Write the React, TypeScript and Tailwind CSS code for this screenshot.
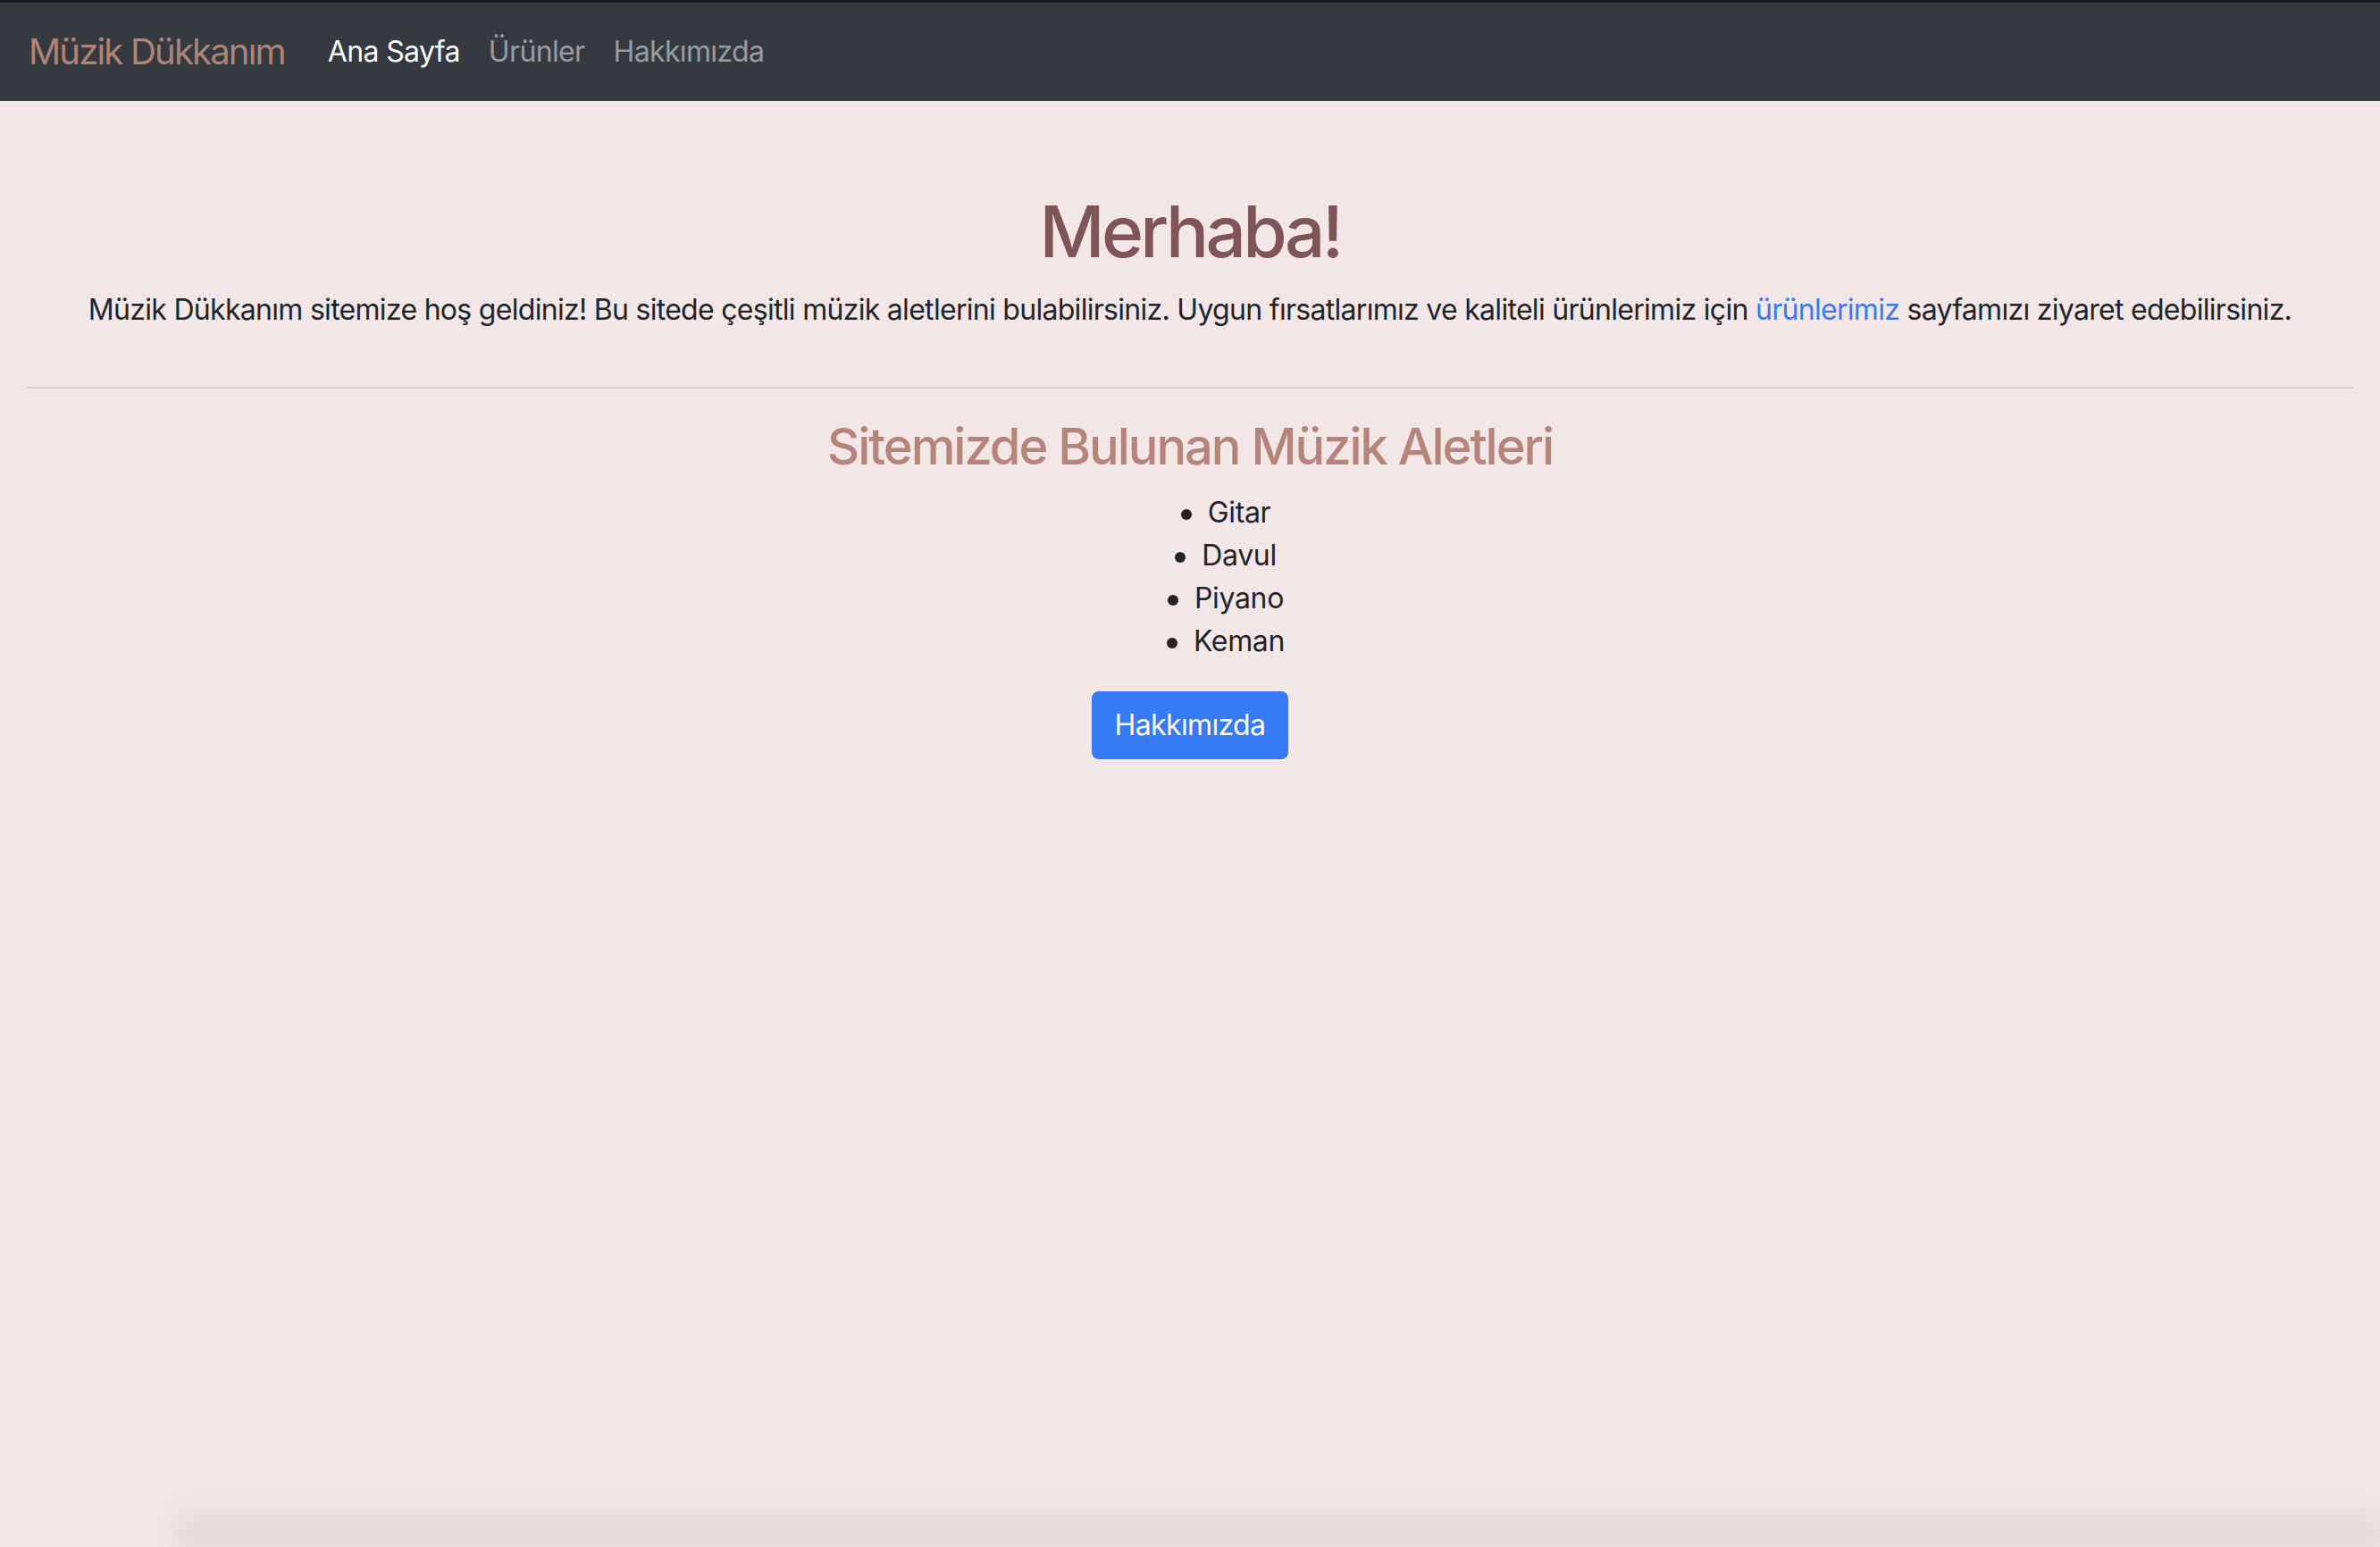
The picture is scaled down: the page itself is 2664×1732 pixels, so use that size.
export default function App() {
  const instruments = ['Gitar', 'Davul', 'Piyano', 'Keman'];

  return (
    <div
      className="relative min-h-screen overflow-hidden bg-[#f2e6e6] text-[#212529]"
      style={{ fontFamily: 'Inter, "Noto Sans", "Liberation Sans", sans-serif' }}
    >
      <nav className="flex items-center border-t-[3px] border-[#1b1b1b] bg-[#343a40] px-8 py-[15px]">
        <a href="#" className="mr-8 py-[10px] text-[40px] leading-[60px] tracking-[-0.045em] text-[#b08377]">
          Müzik Dükkanım
        </a>
        <div className="flex tracking-[-0.04em]">
          <a href="#" className="px-4 text-[32px] leading-[48px] text-white">
            Ana Sayfa
          </a>
          <a href="#" className="px-4 text-[32px] leading-[48px] text-white/50">
            Ürünler
          </a>
          <a href="#" className="px-4 text-[32px] leading-[48px] text-white/50">
            Hakkımızda
          </a>
        </div>
      </nav>

      <main className="px-[30px] pt-[98px] text-center">
        <h1 className="mb-4 text-[80px] font-medium leading-[1.2] tracking-[-0.045em] text-[#7f5558]">
          Merhaba!
        </h1>
        <p className="text-[32px] leading-[48px] tracking-[-0.022em]">
          Müzik Dükkanım sitemize hoş geldiniz! Bu sitede çeşitli müzik aletlerini bulabilirsiniz. Uygun
          fırsatlarımız ve kaliteli ürünlerimiz için{' '}
          <a href="#" className="text-[#3a7af5]">
            ürünlerimiz
          </a>{' '}
          sayfamızı ziyaret edebilirsiniz.
        </p>

        <hr className="mb-8 mt-[62px] border-t-2 border-[#dbd0d0]" />

        <h3 className="mb-4 text-[56px] font-medium leading-[1.2] tracking-[-0.036em] text-[#b5847a]">
          Sitemizde Bulunan Müzik Aletleri
        </h3>
        <ul className="mb-8 pl-[80px] text-[32px] leading-[48px] tracking-[-0.01em]">
          {instruments.map((item) => (
            <li key={item}>
              <span className="mr-[18px] inline-block h-[12px] w-[12px] rounded-full bg-[#212529] align-middle" />
              {item}
            </li>
          ))}
        </ul>

        <button className="rounded-lg border-2 border-[#367af6] bg-[#367af6] px-6 py-[12px] text-[32px] leading-[48px] tracking-[-0.02em] text-white">
          Hakkımızda
        </button>
      </main>

      <div className="pointer-events-none absolute bottom-0 left-[200px] right-0 h-[50px] bg-gradient-to-b from-transparent to-[#ddd1d1] blur-md" />
    </div>
  );
}
